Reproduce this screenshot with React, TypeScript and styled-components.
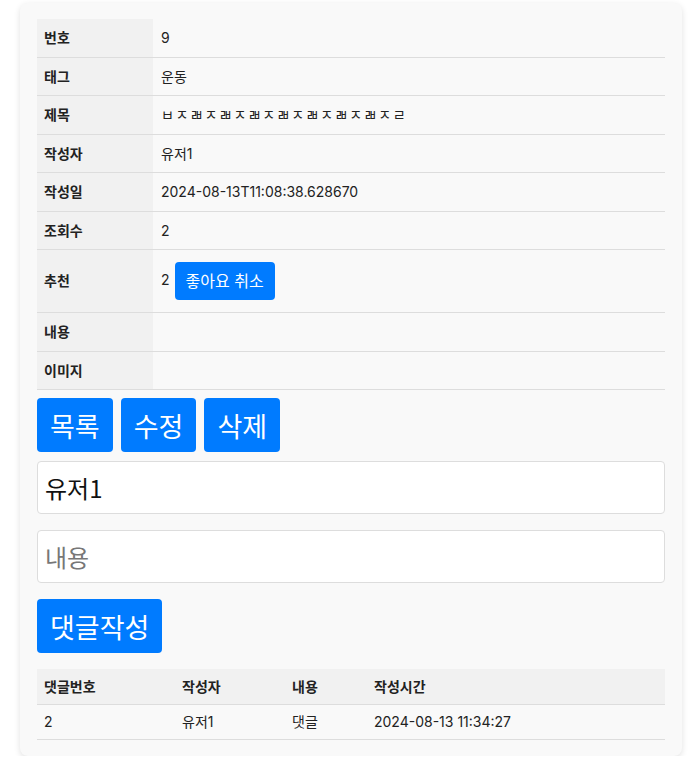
import React from "react";
import styled, { createGlobalStyle } from "styled-components";

const GlobalStyle = createGlobalStyle`
  body {
    margin: 0;
    background: #ffffff;
    font-family: "Inter", "Noto Sans CJK KR", sans-serif;
    color: #222;
  }
`;

const Page = styled.div`
  padding: 3px 17px 0 20px;
`;

const Card = styled.div`
  background: #f9f9f9;
  border-radius: 8px;
  box-shadow: 0 2px 6px rgba(0, 0, 0, 0.12);
  padding: 16px 17px 16px 17px;
  display: flex;
  flex-direction: column;
`;

const InfoTable = styled.table`
  width: 100%;
  border-collapse: collapse;
  font-size: 14px;
`;

const Th = styled.th`
  width: 116px;
  box-sizing: border-box;
  background: #f1f1f1;
  text-align: left;
  font-weight: 700;
  padding: 10px 8px 10px 7px;
  line-height: 17.5px;
  border-bottom: 1px solid #dddddd;
  vertical-align: middle;
  color: #222;
`;

const Td = styled.td<{ $spaced?: boolean }>`
  padding: 10px 8px;
  line-height: 17.5px;
  border-bottom: 1px solid #dddddd;
  vertical-align: middle;
  color: #222;
  letter-spacing: ${(p) => (p.$spaced ? "1.6px" : "normal")};
`;

const SmallButton = styled.button`
  background: #007bff;
  color: #fff;
  border: none;
  border-radius: 4px;
  font-family: "Inter", "Noto Sans CJK KR", sans-serif;
  font-size: 16px;
  padding: 10px 11px;
  margin: 2px 0 2px 5px;
  line-height: 18px;
  vertical-align: middle;
`;

const ButtonRow = styled.div`
  display: flex;
  gap: 8px;
  margin-top: 8px;
`;

const BigButton = styled.button`
  background: #007bff;
  color: #fff;
  border: none;
  border-radius: 4px;
  font-family: "Noto Sans CJK KR", sans-serif;
  font-size: 27px;
  height: 54px;
  padding: 0 13px;
  line-height: 1;
`;

const Input = styled.input`
  box-sizing: border-box;
  width: 100%;
  height: 53px;
  border: 1px solid #dddddd;
  border-radius: 4px;
  background: #fff;
  font-family: "Noto Sans CJK KR", sans-serif;
  font-size: 24px;
  padding: 0 7px;
  color: #111;
  &::placeholder {
    color: #777;
  }
`;

const FirstInput = styled(Input)`
  margin-top: 9px;
`;

const NextInput = styled(Input)`
  margin-top: 16px;
`;

const SubmitButton = styled(BigButton)`
  margin-top: 16px;
  align-self: flex-start;
`;

const CommentTable = styled.table`
  width: 100%;
  border-collapse: collapse;
  font-size: 14px;
  margin-top: 16px;
`;

const CTh = styled.th<{ $w?: number }>`
  text-align: left;
  font-weight: 700;
  background: #f1f1f1;
  padding: 9px 7px;
  line-height: 17px;
  border-bottom: 1px solid #dddddd;
  width: ${(p) => (p.$w ? `${p.$w}px` : "auto")};
  box-sizing: border-box;
`;

const CTd = styled.td`
  padding: 9px 7px;
  line-height: 16px;
  border-bottom: 1px solid #dddddd;
`;

const rows: [string, string, boolean?][] = [
  ["번호", "9"],
  ["태그", "운동"],
  ["제목", "ㅂㅈㄼㅈㄼㅈㄼㅈㄼㅈㄼㅈㄼㅈㄼㅈㄹ", true],
  ["작성자", "유저1"],
  ["작성일", "2024-08-13T11:08:38.628670"],
  ["조회수", "2"],
];

export default function App() {
  return (
    <>
      <GlobalStyle />
      <Page>
        <Card>
          <InfoTable>
            <tbody>
              {rows.map(([k, v, spaced]) => (
                <tr key={k}>
                  <Th>{k}</Th>
                  <Td $spaced={spaced}>{v}</Td>
                </tr>
              ))}
              <tr>
                <Th>추천</Th>
                <Td>
                  2<SmallButton>좋아요 취소</SmallButton>
                </Td>
              </tr>
              <tr>
                <Th>내용</Th>
                <Td></Td>
              </tr>
              <tr>
                <Th>이미지</Th>
                <Td></Td>
              </tr>
            </tbody>
          </InfoTable>
          <ButtonRow>
            <BigButton>목록</BigButton>
            <BigButton>수정</BigButton>
            <BigButton>삭제</BigButton>
          </ButtonRow>
          <FirstInput defaultValue="유저1" />
          <NextInput placeholder="내용" />
          <SubmitButton>댓글작성</SubmitButton>
          <CommentTable>
            <thead>
              <tr>
                <CTh $w={138}>댓글번호</CTh>
                <CTh $w={110}>작성자</CTh>
                <CTh $w={82}>내용</CTh>
                <CTh>작성시간</CTh>
              </tr>
            </thead>
            <tbody>
              <tr>
                <CTd>2</CTd>
                <CTd>유저1</CTd>
                <CTd>댓글</CTd>
                <CTd>2024-08-13 11:34:27</CTd>
              </tr>
            </tbody>
          </CommentTable>
        </Card>
      </Page>
    </>
  );
}
